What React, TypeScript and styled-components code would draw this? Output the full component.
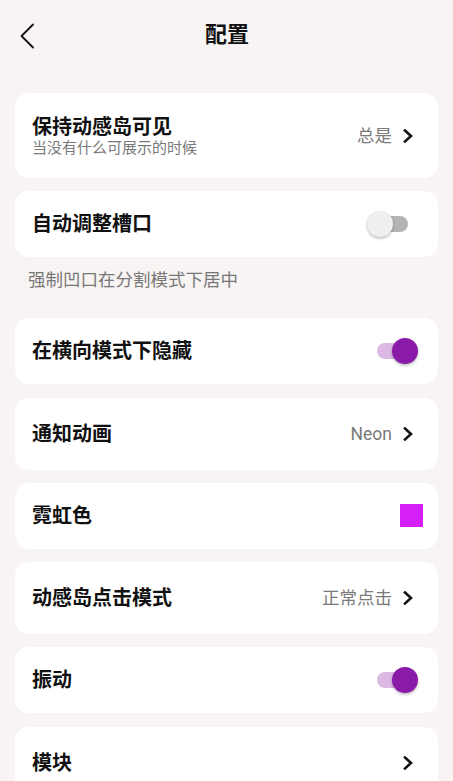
import React, { useState } from 'react'
import styled, { createGlobalStyle } from 'styled-components'

const GlobalStyle = createGlobalStyle`
  html, body {
    margin: 0;
    padding: 0;
    background: #f7f4f3;
  }
  body {
    font-family: Roboto, "Noto Sans CJK SC", "Noto Sans", sans-serif;
    -webkit-font-smoothing: antialiased;
  }
`

type Row = {
    key: string
    title: string
    subtitle?: string
    value?: string
    kind: 'link' | 'toggle' | 'color'
    on?: boolean
    color?: string
    note?: string
}

const rows: Row[] = [
    { key: 'keep', title: '保持动感岛可见', subtitle: '当没有什么可展示的时候', value: '总是', kind: 'link' },
    { key: 'auto', title: '自动调整槽口', kind: 'toggle', on: false, note: '强制凹口在分割模式下居中' },
    { key: 'land', title: '在横向模式下隐藏', kind: 'toggle', on: true },
    { key: 'anim', title: '通知动画', value: 'Neon', kind: 'link' },
    { key: 'neon', title: '霓虹色', kind: 'color', color: '#d41ff6' },
    { key: 'tap', title: '动感岛点击模式', value: '正常点击', kind: 'link' },
    { key: 'vib', title: '振动', kind: 'toggle', on: true },
    { key: 'mod', title: '模块', kind: 'link' },
]

const Chevron = () => (
    <svg width="12" height="16" viewBox="0 0 12 16">
        <polyline points="3,2.5 9,8 3,13.5" fill="none" stroke="#111" strokeWidth="2.6" strokeLinecap="square" strokeLinejoin="miter" />
    </svg>
)

const BackIcon = () => (
    <svg width="16" height="26" viewBox="0 0 16 26">
        <polyline points="14,1.5 2.5,13 14,24.5" fill="none" stroke="#111" strokeWidth="1.8" strokeLinecap="round" strokeLinejoin="round" />
    </svg>
)

const App = () => {
    const [state, setState] = useState<Record<string, boolean>>(() => {
        const s: Record<string, boolean> = {}
        rows.forEach(r => { if (r.kind === 'toggle') s[r.key] = !!r.on })
        return s
    })

    return (
        <Page>
            <GlobalStyle />
            <Header>
                <BackButton><BackIcon /></BackButton>
                <HeaderTitle>配置</HeaderTitle>
            </Header>
            <List>
                {rows.map(r => (
                    <React.Fragment key={r.key}>
                        <Card size={r.subtitle ? 'tall' : r.kind === 'link' ? 'mid' : 'short'}>
                            <Texts>
                                <Title>{r.title}</Title>
                                {r.subtitle && <Subtitle>{r.subtitle}</Subtitle>}
                            </Texts>
                            {r.kind === 'link' && (
                                <Trail>
                                    {r.value && <Value>{r.value}</Value>}
                                    <Chevron />
                                </Trail>
                            )}
                            {r.kind === 'toggle' && (
                                <Switch on={state[r.key]} onClick={() => setState({ ...state, [r.key]: !state[r.key] })}>
                                    <Track on={state[r.key]} />
                                    <Knob on={state[r.key]} />
                                </Switch>
                            )}
                            {r.kind === 'color' && <Swatch color={r.color} />}
                        </Card>
                        {r.note && <Note>{r.note}</Note>}
                    </React.Fragment>
                ))}
            </List>
        </Page>
    )
}

const Page = styled.div`
  min-height: 781px;
  background: #f7f4f3;
`
const Header = styled.div`
  position: relative;
  height: 69px;
  display: flex;
  align-items: center;
  justify-content: center;
`
const BackButton = styled.button`
  position: absolute;
  left: 19px;
  top: 23px;
  padding: 0;
  border: none;
  background: transparent;
  display: flex;
`
const HeaderTitle = styled.h1`
  margin: 0 0 0 1px;
  font-size: 22px;
  font-weight: 700;
  color: #111;
  line-height: 1;
`
const List = styled.div`
  padding: 24px 15px 0;
  display: flex;
  flex-direction: column;
`
const Card = styled.div<{ size: 'tall' | 'mid' | 'short' }>`
  height: ${p => (p.size === 'tall' ? 85 : p.size === 'mid' ? 72 : 66)}px;
  margin-bottom: 13.3px;
  background: #fff;
  border-radius: 14px;
  display: flex;
  align-items: center;
  justify-content: space-between;
  padding: 0 15px 0 17px;
  box-sizing: border-box;
  flex-shrink: 0;
`
const Texts = styled.div`
  display: flex;
  flex-direction: column;
`
const Title = styled.div`
  font-size: 20px;
  font-weight: 700;
  color: #111;
  line-height: 24px;
`
const Subtitle = styled.div`
  font-size: 15px;
  color: #7a7a7a;
  line-height: 17px;
  margin-top: 1px;
`
const Trail = styled.div`
  display: flex;
  align-items: center;
  gap: 10px;
  margin-right: 9px;
`
const Value = styled.span`
  font-size: 17.5px;
  color: #7a7a7a;
  line-height: 20px;
`
const Note = styled.div`
  font-size: 17.5px;
  color: #777;
  line-height: 18px;
  padding: 0 13px;
  margin-bottom: 29.7px;
`
const Switch = styled.div<{ on: boolean }>`
  position: relative;
  width: 52px;
  height: 26px;
  margin-right: 4px;
  cursor: pointer;
`
const Track = styled.div<{ on: boolean }>`
  position: absolute;
  left: 10px;
  top: 5px;
  width: 31px;
  height: 16px;
  border-radius: 8px;
  background: ${p => (p.on ? '#dcb9e2' : '#b3b3b3')};
`
const Knob = styled.div<{ on: boolean }>`
  position: absolute;
  top: 0;
  left: ${p => (p.on ? 25 : 0)}px;
  width: 26px;
  height: 26px;
  border-radius: 50%;
  background: ${p => (p.on ? '#8a1aa8' : '#efefef')};
  box-shadow: 0 1.5px 3px rgba(0, 0, 0, 0.28);
`
const Swatch = styled.div<{ color?: string }>`
  width: 23px;
  height: 23px;
  background: ${p => p.color};
`

export default App
